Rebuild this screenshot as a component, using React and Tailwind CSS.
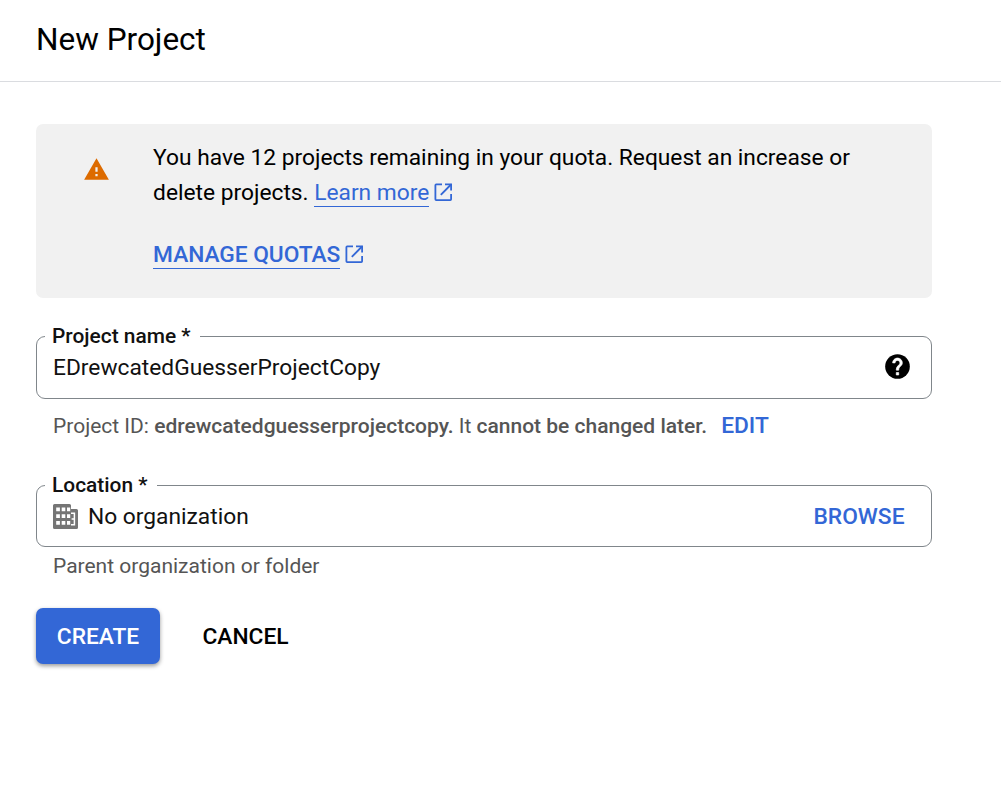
import React from "react";

function ExternalIcon() {
  return (
    <svg className="h-[22px] w-[22px] shrink-0" viewBox="0 0 22 22" fill="none" stroke="#3367d6" strokeWidth="1.8">
      <path d="M9 2.4H3.2Q2.4 2.4 2.4 3.2V17.3Q2.4 18.1 3.2 18.1H17.3Q18.1 18.1 18.1 17.3V12" />
      <path d="M12 2.4H18.1V8.5" />
      <path d="M18 2.5L7.8 12.9" />
    </svg>
  );
}

function Field({ label, children, className }) {
  return (
    <div className={"relative flex w-[896px] items-center justify-between rounded-[9px] border border-[#80868b] " + className}>
      <span className="absolute left-[8px] top-[-13px] bg-white pl-[7px] pr-[9px] text-[20.9px] font-medium leading-[24px] text-[#111] whitespace-nowrap">
        {label}
      </span>
      {children}
    </div>
  );
}

export default function App() {
  return (
    <div className="h-[796px] w-[1001px] overflow-hidden bg-white font-['Roboto',sans-serif] text-black">
      <header className="flex h-[82px] items-center border-b border-[#dadce0] pl-[36px] pb-[1px]">
        <h1 className="text-[31.5px] leading-[40px] whitespace-nowrap">New Project</h1>
      </header>
      <main className="flex flex-col items-start pl-[36px] pt-[42px]">
        <section className="flex h-[174px] w-[896px] rounded-[7px] bg-[#f1f1f1]">
          <svg className="ml-[46.5px] mt-[32px] h-[27px] w-[27px] shrink-0" viewBox="0 0 24 24" fill="#dd6b00">
            <path d="M1 21h22L12 2 1 21zm12-3h-2v-2h2v2zm0-4h-2v-4h2v4z" />
          </svg>
          <div className="ml-[43.6px] pt-[16px] text-[22.75px] leading-[35px] whitespace-nowrap">
            <p>You have 12 projects remaining in your quota. Request an increase or</p>
            <p className="flex items-center">
              <span>delete projects.&nbsp;</span>
              <a className="h-[29px] border-b border-[#3367d6] leading-[29px] text-[#3367d6]">Learn more</a>
              <span className="ml-[4px]"><ExternalIcon /></span>
            </p>
            <p className="mt-[27px] flex items-center pt-[3px] font-medium leading-[35px]">
              <a className="h-[29px] border-b border-[#3367d6] leading-[29px] tracking-[-0.05px] text-[#3367d6]">MANAGE QUOTAS</a>
              <span className="ml-[4px]"><ExternalIcon /></span>
            </p>
          </div>
        </section>

        <Field label="Project name *" className="mt-[38px] h-[63px] pl-[16px] pr-[19px]">
          <span className="text-[22.75px] leading-[30px] text-[#111]">EDrewcatedGuesserProjectCopy</span>
          <svg className="mb-[2px] h-[29px] w-[29px]" viewBox="0 0 24 24" fill="#000">
            <circle cx="12" cy="12" r="10.2" />
            <g stroke="#fff" strokeWidth="0.55" fill="#fff">
              <path d="M11 17h2v2h-2zM15.07 11.25l-.9.92C13.45 12.9 13 13.5 13 15h-2v-.5c0-1.1.45-2.1 1.17-2.83l1.24-1.26c.37-.36.59-.86.59-1.41 0-1.1-.9-2-2-2s-2 .9-2 2H8c0-2.21 1.79-4 4-4s4 1.79 4 4c0 .88-.36 1.68-.93 2.25z" />
            </g>
          </svg>
        </Field>
        <div className="mt-[11px] flex h-[32px] items-center pl-[17px] text-[21px] text-[#555] whitespace-nowrap">
          <span className="pt-[2px]">Project ID: <b className="font-medium">edrewcatedguesserprojectcopy.</b> It <b className="font-medium">cannot be changed later.</b></span>
          <button className="ml-[14px] text-[22.75px] font-medium text-[#3367d6]">EDIT</button>
        </div>

        <Field label="Location *" className="mt-[43px] h-[62px] pl-[16px] pr-[26.5px]">
          <span className="flex items-center">
            <svg className="mt-[1px] h-[25px] w-[25px]" viewBox="0 0 25 25">
              <path fill="#757575" d="M1.5 0H16.5Q18 0 18 1.5V5H23.5Q25 5 25 6.5V23.5Q25 25 23.5 25H1.5Q0 25 0 23.5V1.5Q0 0 1.5 0Z" />
              <path fill="#fff" d="M3.2 3.6h3.7v3.7h-3.7zM8.7 3.6h3.6v3.7H8.7zM14 3.6h3.2v3.7h-3.2zM3.2 10.3h3.7v3.7h-3.7zM8.7 10.3h3.6v3.7H8.7zM14 10.3h3.2v3.7h-3.2zM3.2 17h3.7v3.7h-3.7zM8.7 17h3.6v3.7H8.7zM14 17h3.2v3.7h-3.2z" />
              <path fill="none" stroke="#fff" strokeWidth="1.5" d="M18 9.2H21.4V20.8H18M18.6 15H21.4" />
            </svg>
            <span className="ml-[10px] pt-[1px] text-[22.75px] leading-[30px] text-[#111]">No organization</span>
          </span>
          <button className="pt-[2px] text-[22.75px] font-medium text-[#3367d6]">BROWSE</button>
        </Field>
        <p className="mt-[4px] pl-[17px] text-[21px] leading-[30px] text-[#555]">Parent organization or folder</p>

        <div className="mt-[27px] flex items-center text-[22.75px] font-medium">
          <button className="h-[56px] w-[124px] rounded-[7px] bg-[#3367d6] pt-[2px] text-white shadow-[0_2px_4px_rgba(0,0,0,0.4)]">CREATE</button>
          <button className="ml-[42.5px] pt-[2px]">CANCEL</button>
        </div>
      </main>
    </div>
  );
}
